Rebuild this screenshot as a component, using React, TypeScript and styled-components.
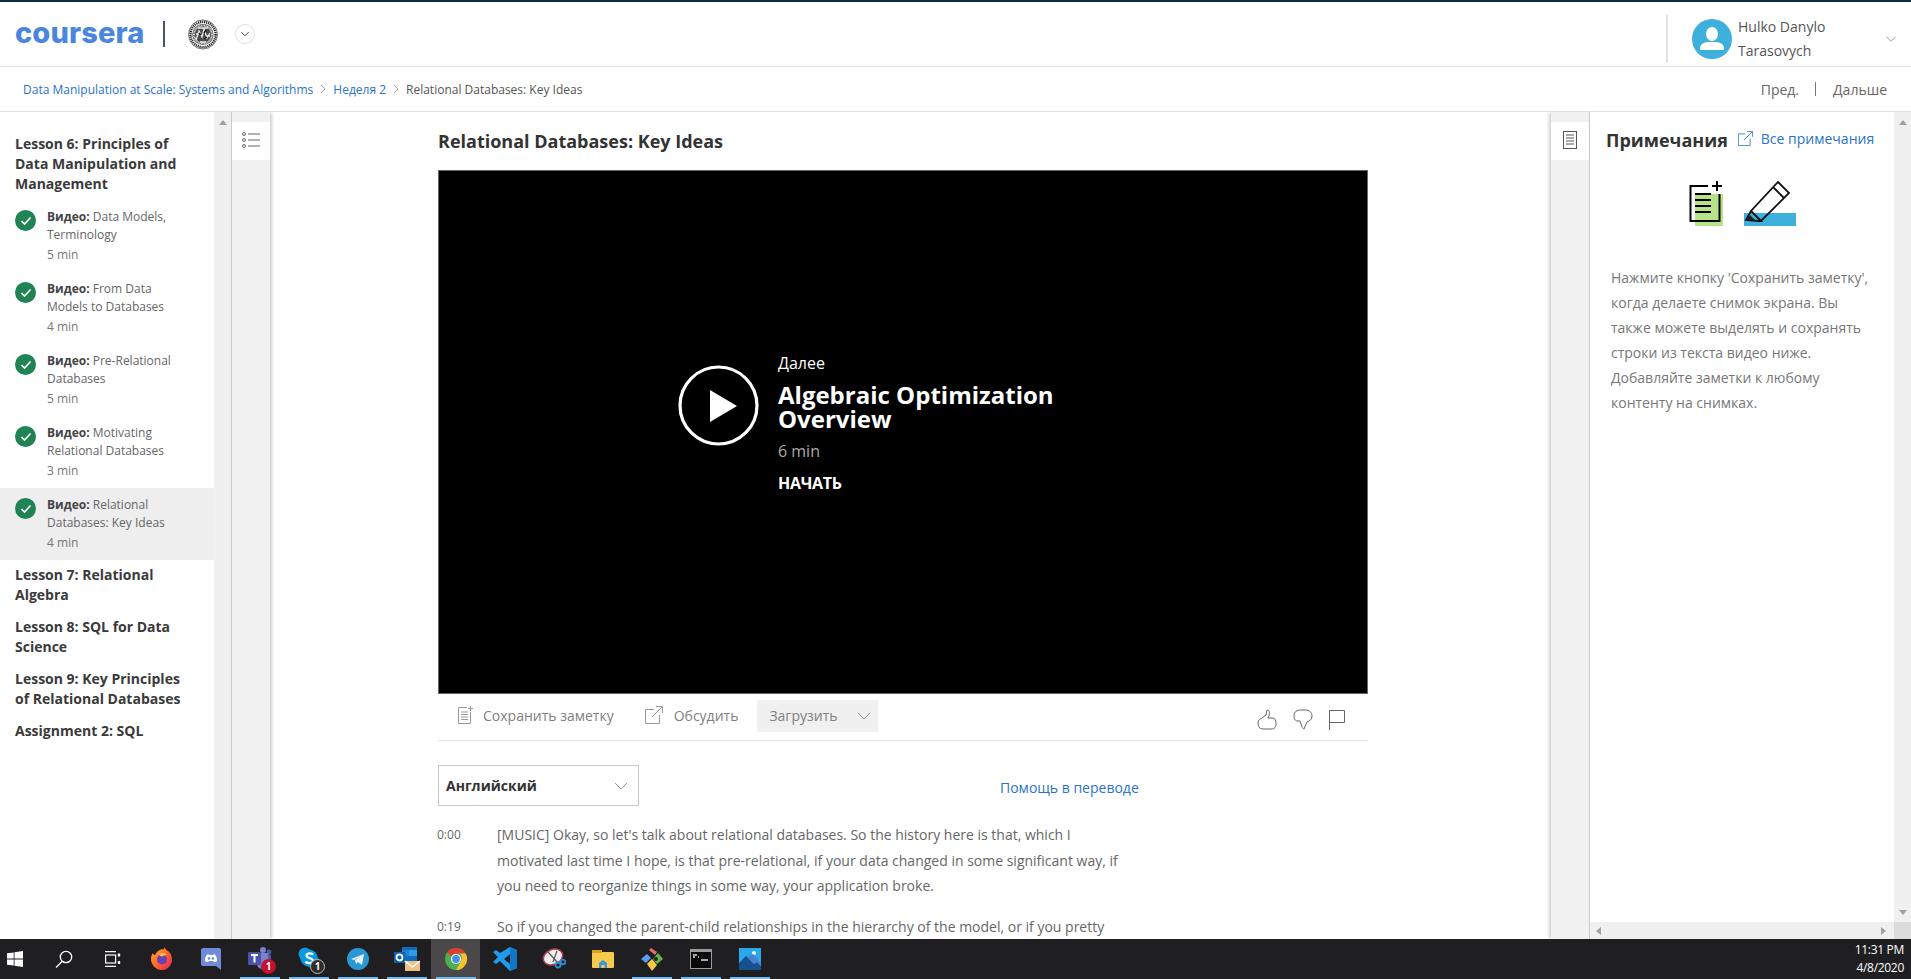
import React from 'react';
import styled, { createGlobalStyle } from 'styled-components';

const Global = createGlobalStyle`
  html, body { margin: 0; padding: 0; height: 100%; overflow: hidden; background: #fff; }
  body { font-family: "Open Sans", "Liberation Sans", sans-serif; color: #333; }
  #root { height: 100%; }
  * { box-sizing: border-box; }
`;

const Page = styled.div`
  height: 979px; width: 1911px; display: flex; flex-direction: column; overflow: hidden;
`;
const Header = styled.header`
  height: 67px; flex: none; display: flex; align-items: center;
  border-top: 2px solid #0c2a4a; border-bottom: 1px solid #e3e3e3; padding-left: 15px; background: #fff;
`;
const Logo = styled.span`
  font-family: "Inter", sans-serif; font-weight: 800; font-size: 29px; letter-spacing: 0.1px; color: #4a86de; line-height: 1;
  width: 127px; display: block; margin-top: -3px; white-space: nowrap;
`;
const LogoBar = styled.span`
  width: 2px; height: 26px; background: #4a5361; margin: 0 23px 0 21px; flex: none;
`;
const RoundChevron = styled.span`
  width: 20px; height: 20px; border-radius: 50%; border: 1px solid #e1e1e1; margin-left: 17px;
  display: flex; align-items: center; justify-content: center;
`;
const UserArea = styled.div`
  margin-left: auto; height: 48px; width: 245px; border-left: 2px solid #e3e3e3; display: flex; align-items: center; padding-left: 24px; align-self: flex-end; margin-bottom: 3px;
`;
const UserName = styled.div`
  font-size: 14px; line-height: 24px; color: #555; margin-left: 6px; width: 130px;
`;
const UserChevron = styled.span`
  display: flex; margin-left: 17px;
`;
const Crumbs = styled.nav`
  height: 45px; flex: none; display: flex; align-items: center; border-bottom: 1px solid #e3e3e3; padding: 0 24px 0 23px; font-size: 12px; background: #fff;
`;
const CrumbLink = styled.a`
  color: #2a73cc;
`;
const CrumbText = styled.span`
  color: #555;
`;
const CrumbSep = styled.span`
  display: flex; margin: 0 7px;
`;
const Pager = styled.div`
  margin-left: auto; display: flex; align-items: center; font-size: 14px; color: #666;
`;
const PagerBar = styled.span`
  width: 1px; height: 14px; background: #777; margin: 0 17px 0 16px;
`;
const Body = styled.div`
  flex: 1; min-height: 0; display: flex; background: #fff;
`;
const Sidebar = styled.aside`
  width: 214px; flex: none; padding-top: 22px;
`;
const Heading = styled.h3`
  margin: 0 0 12px; padding: 0 15px; font-size: 14px; line-height: 20px; font-weight: 700; color: #3a3a3a;
`;
const ItemList = styled.div`
  margin: -6px 0 5px;
`;
const Item = styled.div<{ $active?: boolean }>`
  height: 72px; display: flex; padding: 8px 0 0 15px; background: ${p => (p.$active ? '#eeeeee' : 'transparent')};
`;
const Check = styled.span`
  width: 21px; height: 21px; border-radius: 50%; background: #1f8354; flex: none; margin-top: 2px; display: flex; align-items: center; justify-content: center;
`;
const ItemText = styled.div`
  margin-left: 11px; font-size: 12px; line-height: 18px; color: #666; width: 145px;
  b { font-weight: 700; color: #444; }
`;
const Duration = styled.div`
  color: #777; line-height: 20px; margin-top: 1px;
`;
const VBar = styled.div`
  width: 17px; flex: none; background: #f0f0f0; display: flex; flex-direction: column; align-items: center; justify-content: space-between; padding: 8px 0 7px;
`;
const Triangle = styled.span<{ $down?: boolean }>`
  width: 0; height: 0; border-left: 4px solid transparent; border-right: 4px solid transparent;
  ${p => (p.$down ? 'border-top: 5px solid #a0a0a0;' : 'border-bottom: 5px solid #a0a0a0;')}
`;
const Rail = styled.div<{ $side: 'left' | 'right' }>`
  width: 39px; flex: none; background: #f1f1f1; padding-top: 10px;
  ${p => p.$side === 'left'
    ? 'border-left: 1px solid #c9c9c9; box-shadow: 3px 0 3px -1px #d0d0d0;'
    : 'border-right: 1px solid #c9c9c9; box-shadow: -3px 0 3px -1px #d0d0d0;'}
`;
const RailTab = styled.div`
  height: 38px; background: #fff; display: flex; align-items: center; justify-content: center; padding-bottom: 3px;
`;
const Main = styled.main`
  flex: 1; min-width: 0; padding-left: 168px; overflow: hidden;
`;
const Title = styled.h1`
  margin: 0; height: 58px; font-size: 18px; line-height: 24px; padding-top: 17px; font-weight: 700; color: #333;
`;
const Video = styled.div`
  width: 930px; height: 524px; background: #000; border: 1px solid #666; display: flex; align-items: flex-start; padding: 182px 0 0 239px; color: #fff;
`;
const PlayWrap = styled.span`
  display: flex; margin-top: 12px;
`;
const NextInfo = styled.div`
  margin-left: 19px; width: 330px;
`;
const NextLabel = styled.div`
  font-size: 16px; line-height: 20px;
`;
const NextTitle = styled.div`
  font-size: 24px; font-weight: 700; line-height: 24px; margin-top: 10px;
`;
const NextDuration = styled.div`
  font-size: 16px; line-height: 22px; color: #aaa; margin-top: 9px;
`;
const NextStart = styled.div`
  font-size: 16px; font-weight: 700; line-height: 22px; margin-top: 10px; letter-spacing: -0.3px;
`;
const Actions = styled.div`
  width: 930px; height: 47px; border-bottom: 1px solid #e3e3e3; display: flex; align-items: center; padding-left: 19px; font-size: 14px; color: #808080;
`;
const ActionBtn = styled.span<{ $gap: number; $after: number }>`
  display: flex; align-items: center; gap: ${p => p.$gap}px; margin-right: ${p => p.$after}px; margin-top: -4px;
`;
const Download = styled.span`
  width: 121px; height: 32px; background: #f0f0f0; border-radius: 2px; display: flex; align-items: center; justify-content: space-between; padding: 0 7px 0 12px; margin-top: -3px; margin-left: 1px;
`;
const Feedback = styled.div`
  margin-left: auto; display: flex; align-items: center; gap: 16px; margin-right: 23px; margin-top: 5px;
`;
const LangRow = styled.div`
  width: 930px; display: flex; align-items: center; margin-top: 24px; height: 41px;
`;
const LangSelect = styled.div`
  width: 201px; height: 41px; border: 1px solid #c8c8c8; display: flex; align-items: center; justify-content: space-between; padding: 0 10px 0 7px; font-size: 14px; font-weight: 700; color: #333;
`;
const HelpLink = styled.a`
  font-size: 14px; color: #2a73cc; margin-left: 361px; margin-top: 4px;
`;
const Row = styled.div`
  display: flex; margin-top: 16px; &:last-child { margin-top: 15px; }
`;
const Stamp = styled.span`
  width: 60px; margin-left: -1px; flex: none; font-size: 12px; line-height: 26px; color: #666;
`;
const Para = styled.p`
  margin: 0; font-size: 14px; line-height: 25.5px; color: #666; white-space: nowrap;
`;
const NotesPanel = styled.section`
  width: 321px; flex: none; display: flex; flex-direction: column; min-height: 0;
`;
const NotesTop = styled.div`
  flex: 1; display: flex; min-height: 0;
`;
const NotesBody = styled.div`
  flex: 1; padding: 15px 0 0 16px;
`;
const NotesHead = styled.div`
  display: flex; align-items: center; height: 26px;
`;
const NotesTitle = styled.h2`
  margin: 0; font-size: 18px; font-weight: 700; color: #333; line-height: 24px;
`;
const ExternalIconWrap = styled.span`
  display: flex; margin-left: 10px; margin-top: -4px;
`;
const NotesLink = styled.a`
  font-size: 14px; color: #2a73cc; margin-left: 8px; margin-top: -3px;
`;
const Illustration = styled.div`
  display: flex; gap: 21px; padding-left: 83px; margin-top: 28px; height: 46px; align-items: flex-start;
`;
const NotesText = styled.p`
  margin: 39px 0 0 5px; font-size: 14px; line-height: 24.9px; color: #777; white-space: nowrap;
`;
const HBar = styled.div`
  height: 17px; flex: none; background: #f0f0f0; display: flex; align-items: center; justify-content: space-between; padding: 0 25px 0 6px; position: relative;
`;
const HTriangle = styled.span<{ $right?: boolean }>`
  width: 0; height: 0; border-top: 4px solid transparent; border-bottom: 4px solid transparent;
  ${p => (p.$right ? 'border-left: 5px solid #a0a0a0;' : 'border-right: 5px solid #a0a0a0;')}
`;
const HCorner = styled.span`
  position: absolute; right: 0; top: 0; width: 17px; height: 17px; background: #dcdcdc;
`;
const Taskbar = styled.footer`
  height: 40px; flex: none; background: #1f1f22; display: flex; align-items: center;
`;
const TaskBtn = styled.div<{ $open?: boolean; $active?: boolean; $narrow?: boolean }>`
  width: ${p => (p.$narrow ? '39px' : '49px')}; height: 40px; flex: none; display: flex; align-items: center; justify-content: ${p => (p.$narrow ? 'flex-start' : 'center')};
  padding-left: ${p => (p.$narrow ? '7px' : '0')};
  position: relative; background: ${p => (p.$active ? '#4a4849' : 'transparent')};
  &::after { content: ''; display: ${p => (p.$open ? 'block' : 'none')}; position: absolute; bottom: 0; left: 4.5px; right: 4.5px; height: 2px; background: #76b9ed; }
`;
const Count = styled.span<{ $skype?: boolean }>`
  position: absolute; left: 26px; top: 20px; width: 15px; height: 15px; border-radius: 50%;
  background: ${p => (p.$skype ? '#2c2c2c' : '#c4112f')}; border: 1px solid ${p => (p.$skype ? '#bbb' : '#c4112f')}; color: #fff; font-size: 10px; font-weight: 700; line-height: 13px; text-align: center;
`;
const Clock = styled.div`
  margin-left: auto; width: 58px; margin-right: 7px; text-align: right; color: #fff; font-size: 12px; line-height: 18.5px; font-family: "Open Sans", sans-serif; letter-spacing: -0.3px;
`;

const Chev = ({ size = 10, color = '#888', w = 1 }: { size?: number; color?: string; w?: number }) => (
  <svg width={size + 4} height={size} viewBox="0 0 14 10" fill="none"><path d="M1 2l6 6 6-6" stroke={color} strokeWidth={w} /></svg>
);
const CrumbChev = () => (
  <svg width="6" height="10" viewBox="0 0 6 10" fill="none"><path d="M1 1l4 4-4 4" stroke="#aaa" /></svg>
);
const Seal = () => {
  const marks = Array.from({ length: 36 }, (_, i) => i * 10);
  return (
    <svg width="30" height="31" viewBox="0 0 30 31">
      <circle cx="15" cy="15.5" r="14.5" fill="#fff" stroke="#777" strokeWidth="1" />
      <circle cx="15" cy="15.5" r="12.6" fill="none" stroke="#222" strokeWidth="2.4" strokeDasharray="1.2 0.8" />
      <circle cx="15" cy="15.5" r="10.6" fill="#4a4a4a" />
      {marks.map(a => <rect key={a} x="14.5" y="5.5" width="1" height="2" fill="#ddd" transform={`rotate(${a} 15 15.5)`} />)}
      <path d="M8 21l3-9 3 6 2-8 3 9 3-5M10 9h10M8 15h3M19 17h3M12 23h6" stroke="#eee" strokeWidth="1.3" fill="none" />
      <path d="M11 14l2 2M16 20l3-2M18 11l-2 3" stroke="#111" strokeWidth="1.5" />
    </svg>
  );
};
const Avatar = () => (
  <svg width="40" height="40" viewBox="0 0 40 40">
    <circle cx="20" cy="20" r="20" fill="#3db0dc" />
    <ellipse cx="20" cy="15" rx="6" ry="7" fill="#fff" />
    <path d="M8 31v-2c0-4 5-6 8-6h8c3 0 8 2 8 6v2z" fill="#fff" />
  </svg>
);
const CheckMark = () => (
  <svg width="12" height="10" viewBox="0 0 12 10" fill="none"><path d="M1.5 5l3 3 6-6.5" stroke="#fff" strokeWidth="1.6" /></svg>
);
const ListIcon = () => (
  <svg width="18" height="16" viewBox="0 0 18 16" fill="none" stroke="#666">
    <circle cx="2" cy="2" r="1.5" /><circle cx="2" cy="8" r="1.5" /><circle cx="2" cy="14" r="1.5" />
    <path d="M6 2h12M6 8h12M6 14h12" />
  </svg>
);
const NoteRailIcon = () => (
  <svg width="14" height="18" viewBox="0 0 14 18" fill="none" stroke="#555">
    <rect x="0.5" y="0.5" width="13" height="17" /><path d="M3 4h8M3 7h8M3 10h8M3 13h8" />
  </svg>
);
const Play = () => (
  <svg width="81" height="81" viewBox="0 0 81 81">
    <circle cx="40.5" cy="40.5" r="38.5" fill="none" stroke="#fff" strokeWidth="3.2" />
    <path d="M32 25l27 16-27 16z" fill="#fff" />
  </svg>
);
const SaveNoteIcon = () => (
  <svg width="16" height="19" viewBox="0 0 16 19" fill="none" stroke="#999">
    <path d="M10 1.5H1.5v16h12V6" /><path d="M4 6h7M4 8.5h7M4 11h7M4 13.5h7" /><path d="M13.5 0v5M11 2.5h5" />
  </svg>
);
const ExternalIcon = ({ size = 18, color = '#999' }: { size?: number; color?: string }) => (
  <svg width={size} height={size} viewBox="0 0 18 18" fill="none" stroke={color}>
    <path d="M9 3.5H0.5v14h14V9" /><path d="M7 11L17 1M11 0.5h6.5V7" />
  </svg>
);
const ThumbUp = () => (
  <svg width="20" height="21" viewBox="0 0 20 21" fill="none" stroke="#666">
    <path d="M1 14c0-3 2-4 4-5l4-3 1-5c2 0 3 2 2 6l-1 2h4c3 0 4 2 4 5 0 4-1 6-5 6H6c-3 0-5-2-5-6z" />
  </svg>
);
const ThumbDown = () => (
  <svg width="20" height="21" viewBox="0 0 20 21" fill="none" stroke="#666">
    <path d="M19 7c0 3-2 5-5 6l-1 2-2 5c-1 0-2-2-3-5l-1-3H4C2 12 1 9 1 6c0-3 3-5 7-5h5c3 0 6 2 6 6z" />
  </svg>
);
const Flag = () => (
  <svg width="16" height="20" viewBox="0 0 16 20" fill="none" stroke="#666"><path d="M0.5 20V0.5h15v12H0.5" /></svg>
);
const NoteArt = () => (
  <svg width="34" height="46" viewBox="0 0 34 46">
    <rect x="6" y="13" width="28" height="32" fill="#b6e388" />
    <path d="M19 5H1.5v35h29V13" fill="none" stroke="#000" strokeWidth="2" />
    <path d="M6 13h16M6 19h16M6 25h16M6 31h16" stroke="#000" strokeWidth="2" />
    <path d="M28 0v10M23 5h10" stroke="#000" strokeWidth="2" />
  </svg>
);
const PenArt = () => (
  <svg width="52" height="46" viewBox="0 0 52 46">
    <rect x="0" y="32" width="52" height="13" fill="#3db0dc" />
    <path d="M34 1L45 12 17 40 7 30z M29 6L40 17 M2 39l5-9 10 10-3 0z" fill="none" stroke="#111" strokeWidth="1.8" />
    <path d="M2 39l4-5 5 5z" fill="#222" />
  </svg>
);

const Win = () => (
  <svg width="16" height="16" viewBox="0 0 16 16" fill="#fff"><path d="M0 2.3l6.7-.9v6.2H0zM7.5 1.2L16 0v7.6H7.5zM0 8.4h6.7v6.2L0 13.7zM7.5 8.4H16V16l-8.5-1.2z" /></svg>
);
const SearchIc = () => (
  <svg width="18" height="18" viewBox="0 0 18 18" fill="none" stroke="#fff" strokeWidth="1.3"><circle cx="11" cy="7" r="5.7" /><path d="M7 11.5L1 17.5" /></svg>
);
const TaskView = () => (
  <svg width="16" height="16" viewBox="0 0 16 16" fill="none" stroke="#fff" strokeWidth="1.2"><path d="M0 0.6h11M0 15.4h11" /><rect x="0.6" y="4" width="10" height="8" /><path d="M14 2.5v3M14 10v3" strokeWidth="2.4" /></svg>
);
const Firefox = () => (
  <svg width="24" height="24" viewBox="0 0 24 24">
    <defs><linearGradient id="ff" x1="0" y1="0" x2="1" y2="1"><stop offset="0" stopColor="#ffb020" /><stop offset=".6" stopColor="#ff5a2c" /><stop offset="1" stopColor="#e0216b" /></linearGradient></defs>
    <path d="M12 2c1 1 2 0 3-2 0 2 1 3 3 4 4 3 5 9 3 13-2 4-5 6-9 6-6 0-11-5-11-11C1 9 2 7 3 6c0 1 1 2 2 2 1-3 4-5 7-6z" fill="url(#ff)" />
    <circle cx="12" cy="12.5" r="5" fill="#6b3fb5" />
    <path d="M9 7c3-2 6-1 8 1-2 0-3 0-4 1-2 1-3 0-4-2z" fill="#ffc24b" />
  </svg>
);
const Discord = () => (
  <svg width="20" height="22" viewBox="0 0 20 22">
    <path d="M2 0h16a2 2 0 012 2v20l-5-4H2a2 2 0 01-2-2V2a2 2 0 012-2z" fill="#6f8bd8" />
    <path d="M4 13c0-4 1-6 3-7l1 1h4l1-1c2 1 3 3 3 7-1 1-2 1-3 1l-1-1H8l-1 1c-1 0-2 0-3-1z" fill="#fff" />
    <circle cx="8" cy="10.5" r="1.3" fill="#6f8bd8" /><circle cx="12" cy="10.5" r="1.3" fill="#6f8bd8" />
  </svg>
);
const Teams = () => (
  <svg width="24" height="24" viewBox="0 0 24 24">
    <circle cx="15" cy="3" r="3" fill="#7b83c8" /><circle cx="21" cy="5" r="2.4" fill="#5059a8" />
    <rect x="15" y="7" width="8" height="10" rx="2" fill="#5059a8" />
    <path d="M9 6h11v11a5 5 0 01-5 5h-1a5 5 0 01-5-5z" fill="#7b83c8" />
    <rect x="0" y="5" width="13" height="13" rx="1" fill="#4a52aa" />
    <path d="M3 8h7M6.5 8v7.5" stroke="#fff" strokeWidth="2" />
  </svg>
);
const Skype = () => (
  <svg width="22" height="24" viewBox="0 0 22 24">
    <circle cx="7" cy="7" r="6.5" fill="#0b9ae0" /><circle cx="15" cy="15" r="6.5" fill="#0b9ae0" />
    <circle cx="11" cy="11" r="8.6" fill="#0b9ae0" />
    <path d="M15 7.5c-1-1.4-6-2-6.5 1-.3 3 6.5 2 6.5 5.5 0 2.5-6 3-7.5.5" fill="none" stroke="#fff" strokeWidth="2.2" />
  </svg>
);
const Telegram = () => (
  <svg width="22" height="22" viewBox="0 0 22 22">
    <circle cx="11" cy="11" r="11" fill="#2a98d5" />
    <path d="M4 11l13-5-2 11-4-3-2 2-1-4 6-4-7 4z" fill="#e8f4fb" />
  </svg>
);
const Outlook = () => (
  <svg width="26" height="26" viewBox="0 0 26 26">
    <rect x="8" y="1" width="15" height="14" fill="#0f6cbd" /><rect x="15" y="4" width="8" height="6" fill="#2e9be3" /><rect x="8" y="4" width="7" height="6" fill="#1a86d8" />
    <rect x="0" y="6" width="11" height="11" fill="#0b5fae" />
    <circle cx="5.5" cy="11.5" r="3" fill="none" stroke="#fff" strokeWidth="1.8" />
    <rect x="11" y="15" width="15" height="10" fill="#ecc28a" />
    <path d="M11 15l7.5 6 7.5-6" fill="none" stroke="#fff" strokeWidth="1.3" />
  </svg>
);
const Chrome = () => (
  <svg width="22" height="22" viewBox="0 0 22 22">
    <circle cx="11" cy="11" r="11" fill="#4caf50" />
    <path d="M11 0a11 11 0 019.53 5.5H11a5.5 5.5 0 00-4.76 2.75L2.2 4.4A11 11 0 0111 0z" fill="#e33b2e" />
    <path d="M20.53 5.5A11 11 0 0111 22l4.76-8.25A5.5 5.5 0 0016.5 11a5.5 5.5 0 00-1.5-5.5z" fill="#fbc02d" />
    <circle cx="11" cy="11" r="5" fill="#fff" /><circle cx="11" cy="11" r="3.9" fill="#4a8df0" />
  </svg>
);
const VSCode = () => (
  <svg width="24" height="24" viewBox="0 0 24 24">
    <path d="M17 0l7 3v18l-7 3-10-10-4 3-3-2 5-4.9L0 5l3-2 4 3z" fill="#1f9cf0" />
    <path d="M17 0l7 3v18l-7 3z" fill="#1177c4" /><path d="M17 7l-6 5 6 5z" fill="#1f1f22" />
  </svg>
);
const Snip = () => (
  <svg width="24" height="22" viewBox="0 0 24 22" fill="none">
    <ellipse cx="11" cy="9" rx="10" ry="7.5" fill="#eeeeee" stroke="#b04048" strokeWidth="1.5" transform="rotate(-25 11 9)" />
    <path d="M6 4l10 11M15 3L11 14" stroke="#555" strokeWidth="1.2" />
    <circle cx="16" cy="17" r="2.5" stroke="#2a8fd6" strokeWidth="1.8" /><circle cx="21" cy="14" r="2.3" stroke="#2a8fd6" strokeWidth="1.8" />
  </svg>
);
const Folder = () => (
  <svg width="22" height="18" viewBox="0 0 22 18">
    <path d="M0 1a1 1 0 011-1h8l1 2h11a1 1 0 011 1v14a1 1 0 01-1 1H1a1 1 0 01-1-1z" fill="#f6cb4c" />
    <rect x="0" y="0" width="10" height="3" fill="#d69f2a" />
    <path d="M7 18v-5l4-3 4 3v5h-2.5v-3h-3v3z" fill="#3b95d8" />
  </svg>
);
const GitExt = () => (
  <svg width="24" height="24" viewBox="0 0 24 24">
    <path d="M7 7l-6 5 5 4 5-5z" fill="#5a9cf5" />
    <path d="M18 6l5 6-6 5-4-5z" fill="#69b745" /><path d="M7 17l5-5 5 6-5 6z" fill="#f5c84c" />
    <circle cx="16" cy="12" r="2" fill="#222" />
    <path d="M11 1l6 4-2 3-6-5z" fill="#e86a6f" />
  </svg>
);
const Cmd = () => (
  <svg width="22" height="20" viewBox="0 0 22 20">
    <rect width="22" height="20" fill="#9b9b9b" /><rect x="1" y="3" width="20" height="16" fill="#0a0a0a" />
    <path d="M3 6h4M3 8h2M8 8h1M11 11h7" stroke="#ddd" strokeWidth="1.3" />
  </svg>
);
const Photos = () => (
  <svg width="22" height="22" viewBox="0 0 22 22">
    <rect width="22" height="22" fill="#29a8ea" /><circle cx="15" cy="5" r="2" fill="#e8f6ff" />
    <path d="M0 22V15l7-7 8 8 3-2 4 4v4z" fill="#15508f" /><path d="M8 9l6-3 8 9v3l-4-4-3 2z" fill="#4d7fcf" />
  </svg>
);

const lessons = [
  ['Data Models,', 'Terminology', '5 min'],
  ['From Data', 'Models to Databases', '4 min'],
  ['Pre-Relational', 'Databases', '5 min'],
  ['Motivating', 'Relational Databases', '3 min'],
  ['Relational', 'Databases: Key Ideas', '4 min'],
];

export default function App() {
  return (
    <Page>
      <Global />
      <Header>
        <Logo>coursera</Logo>
        <LogoBar />
        <Seal />
        <RoundChevron><Chev size={6} color="#333" w={1.6} /></RoundChevron>
        <UserArea>
          <Avatar />
          <UserName>Hulko Danylo<br />Tarasovych</UserName>
          <UserChevron><Chev size={8} /></UserChevron>
        </UserArea>
      </Header>
      <Crumbs>
        <CrumbLink>Data Manipulation at Scale: Systems and Algorithms</CrumbLink>
        <CrumbSep><CrumbChev /></CrumbSep>
        <CrumbLink>Неделя 2</CrumbLink>
        <CrumbSep><CrumbChev /></CrumbSep>
        <CrumbText>Relational Databases: Key Ideas</CrumbText>
        <Pager>Пред.<PagerBar />Дальше</Pager>
      </Crumbs>
      <Body>
        <Sidebar>
          <Heading>Lesson 6: Principles of<br />Data Manipulation and<br />Management</Heading>
          <ItemList>
            {lessons.map((l, i) => (
              <Item key={l[0]} $active={i === 4}>
                <Check><CheckMark /></Check>
                <ItemText>
                  <b>Видео:</b> {l[0]}<br />{l[1]}
                  <Duration>{l[2]}</Duration>
                </ItemText>
              </Item>
            ))}
          </ItemList>
          <Heading>Lesson 7: Relational<br />Algebra</Heading>
          <Heading>Lesson 8: SQL for Data<br />Science</Heading>
          <Heading>Lesson 9: Key Principles<br />of Relational Databases</Heading>
          <Heading>Assignment 2: SQL</Heading>
        </Sidebar>
        <VBar><Triangle /></VBar>
        <Rail $side="left"><RailTab><ListIcon /></RailTab></Rail>
        <Main>
          <Title>Relational Databases: Key Ideas</Title>
          <Video>
            <PlayWrap><Play /></PlayWrap>
            <NextInfo>
              <NextLabel>Далее</NextLabel>
              <NextTitle>Algebraic Optimization<br />Overview</NextTitle>
              <NextDuration>6 min</NextDuration>
              <NextStart>НАЧАТЬ</NextStart>
            </NextInfo>
          </Video>
          <Actions>
            <ActionBtn $gap={10} $after={31}><SaveNoteIcon />Сохранить заметку</ActionBtn>
            <ActionBtn $gap={11} $after={18}><ExternalIcon />Обсудить</ActionBtn>
            <Download>Загрузить<Chev size={10} /></Download>
            <Feedback><ThumbUp /><ThumbDown /><Flag /></Feedback>
          </Actions>
          <LangRow>
            <LangSelect>Английский<Chev size={10} color="#999" /></LangSelect>
            <HelpLink>Помощь в переводе</HelpLink>
          </LangRow>
          <Row>
            <Stamp>0:00</Stamp>
            <Para>[MUSIC] Okay, so let's talk about relational databases. So the history here is that, which I<br />motivated last time I hope, is that pre-relational, if your data changed in some significant way, if<br />you need to reorganize things in some way, your application broke.</Para>
          </Row>
          <Row>
            <Stamp>0:19</Stamp>
            <Para>So if you changed the parent-child relationships in the hierarchy of the model, or if you pretty</Para>
          </Row>
        </Main>
        <Rail $side="right"><RailTab><NoteRailIcon /></RailTab></Rail>
        <NotesPanel>
          <NotesTop>
            <NotesBody>
              <NotesHead>
                <NotesTitle>Примечания</NotesTitle>
                <ExternalIconWrap><ExternalIcon size={15} color="#2a73cc" /></ExternalIconWrap>
                <NotesLink>Все примечания</NotesLink>
              </NotesHead>
              <Illustration><NoteArt /><PenArt /></Illustration>
              <NotesText>
                Нажмите кнопку 'Сохранить заметку',<br />когда делаете снимок экрана. Вы<br />также можете выделять и сохранять<br />строки из текста видео ниже.<br />Добавляйте заметки к любому<br />контенту на снимках.
              </NotesText>
            </NotesBody>
            <VBar><Triangle /><Triangle $down /></VBar>
          </NotesTop>
          <HBar><HTriangle /><HTriangle $right /><HCorner /></HBar>
        </NotesPanel>
      </Body>
      <Taskbar>
        <TaskBtn $narrow><Win /></TaskBtn>
        <TaskBtn><SearchIc /></TaskBtn>
        <TaskBtn><TaskView /></TaskBtn>
        <TaskBtn><Firefox /></TaskBtn>
        <TaskBtn><Discord /></TaskBtn>
        <TaskBtn $open><Teams /><Count>1</Count></TaskBtn>
        <TaskBtn $open><Skype /><Count $skype>1</Count></TaskBtn>
        <TaskBtn $open><Telegram /></TaskBtn>
        <TaskBtn $open><Outlook /></TaskBtn>
        <TaskBtn $open $active><Chrome /></TaskBtn>
        <TaskBtn><VSCode /></TaskBtn>
        <TaskBtn><Snip /></TaskBtn>
        <TaskBtn><Folder /></TaskBtn>
        <TaskBtn $open><GitExt /></TaskBtn>
        <TaskBtn $open><Cmd /></TaskBtn>
        <TaskBtn $open><Photos /></TaskBtn>
        <Clock>11:31 PM<br />4/8/2020</Clock>
      </Taskbar>
    </Page>
  );
}
